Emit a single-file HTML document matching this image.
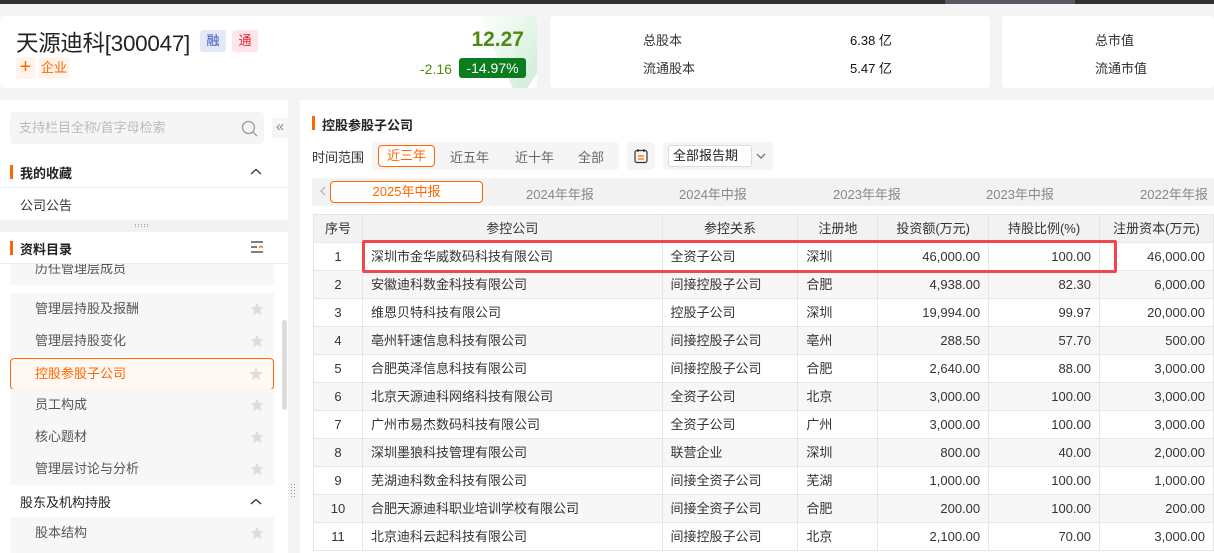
<!DOCTYPE html>
<html><head><meta charset="utf-8"><style>
*{box-sizing:border-box;margin:0;padding:0}
html,body{width:1214px;height:553px;overflow:hidden}
body{background:#f4f4f4;font-family:"Liberation Sans","Noto Sans CJK SC",sans-serif;color:#333;position:relative;font-size:13px}
.abs{position:absolute}
.card{position:absolute;background:#fff;border-radius:4px;top:16px;height:72px;overflow:hidden}
.tag{position:absolute;height:22px;border-radius:3px;font-size:13px;text-align:center;line-height:22px}
.side{position:absolute;left:0;top:100px;width:288px;height:453px;background:#fff;overflow:hidden}
.item{position:absolute;left:10px;width:264px;height:32px;background:#f7f7f7;color:#555;line-height:32px;padding-left:25px;font-size:13px}
.star{position:absolute;right:10px;top:9px;width:14px;height:14px}
.main{position:absolute;left:300px;top:100px;width:914px;height:453px;background:#fff}
.tw{position:absolute;left:313px;top:214px;width:901px;height:339px;overflow:hidden}
table{border-collapse:collapse;font-size:13px;table-layout:fixed}
td,th{height:28px;line-height:26px;border:1px solid #e6e6e6;padding:0 8px;white-space:nowrap;overflow:hidden;box-sizing:border-box}
tr{height:28px}
th{background:#f2f2f2;font-weight:normal;color:#333;text-align:center}
tr:nth-child(odd) td{background:#f7f7f7}
td.c{text-align:center}td.r{text-align:right}
</style></head><body>
<svg width="0" height="0" style="position:absolute"><defs><path id="st" d="M7 0.5 L8.9 5 L13.6 5.3 L10 8.4 L11.1 13.2 L7 10.6 L2.9 13.2 L4 8.4 L0.4 5.3 L5.1 5 Z" fill="#ddd"/></defs></svg>
<div class="abs" style="left:0;top:0;width:1214px;height:4px;background:#2f3033"></div>
<div class="abs" style="left:945px;top:0;width:130px;height:4px;background:#555a60"></div>
<div class="card" style="left:0;width:537px">
 <svg class="abs" style="left:477px;top:0" width="60" height="84"><defs><linearGradient id="g" x1="0" y1="0" x2="1" y2="1"><stop offset="0" stop-color="#fff"/><stop offset="1" stop-color="#c9ecd2"/></linearGradient></defs><path d="M0 0 L60 0 L60 57 L42 84 Z" fill="url(#g)"/></svg>
 <div class="abs" style="left:16px;top:10px;font-size:22.5px;color:#222;letter-spacing:-0.3px;white-space:nowrap">天源迪科[300047]</div>
 <div class="tag" style="left:200px;top:14px;width:26px;background:#e3e8f7;color:#3355bb">融</div>
 <div class="tag" style="left:232px;top:14px;width:26px;background:#fde5e8;color:#e23">通</div>
 <div class="tag" style="left:16px;top:41px;width:19px;background:#fff3ea;color:#f60;font-size:20px;line-height:20px">+</div>
 <div class="tag" style="left:39px;top:41px;width:30px;background:#fff3ea;color:#f60">企业</div>
 <div class="abs" style="right:13px;top:12px;font-size:21px;color:#4f8a10;font-weight:bold">12.27</div>
 <div class="abs" style="left:420px;top:45px;font-size:14px;color:#4f8a10">-2.16</div>
 <div class="abs" style="left:459px;top:42px;width:67px;height:20px;background:#0a7d1e;color:#fff;border-radius:3px;text-align:center;font-size:14px;line-height:20px">-14.97%</div>
</div>
<div class="card" style="left:550px;width:440px;font-size:13px">
 <div class="abs" style="left:93px;top:14px">总股本</div><div class="abs" style="left:300px;top:14px;color:#111">6.38 亿</div>
 <div class="abs" style="left:93px;top:42px">流通股本</div><div class="abs" style="left:300px;top:42px;color:#111">5.47 亿</div>
</div>
<div class="card" style="left:1002px;width:212px">
 <div class="abs" style="left:93px;top:14px">总市值</div>
 <div class="abs" style="left:93px;top:42px">流通市值</div>
</div>

<div class="side">
 <div class="abs" style="left:10px;top:12px;width:254px;height:32px;background:#f5f5f5;border-radius:4px;color:#bbb;line-height:32px;padding-left:9px">支持栏目全称/首字母检索</div>
 <svg class="abs" style="left:241px;top:20px" width="17" height="17"><circle cx="7.5" cy="7.5" r="6" fill="none" stroke="#999" stroke-width="1.3"/><path d="M12 12 L16 16" stroke="#999" stroke-width="1.3"/></svg>
 <div class="abs" style="left:272px;top:18px;width:16px;height:20px;background:#f5f5f5;color:#888;font-size:15px;line-height:18px;text-align:center">«</div>
 <div class="abs" style="left:10px;top:65px;width:3px;height:14px;background:#f60"></div>
 <div class="abs" style="left:20px;top:63px;font-weight:bold;color:#222">我的收藏</div>
 <svg class="abs" style="left:250px;top:68px" width="12" height="8"><path d="M1 6 L6 1.5 L11 6" fill="none" stroke="#333" stroke-width="1.3"/></svg>
 <div class="abs" style="left:0;top:87px;width:288px;height:1px;background:#eee"></div>
 <div class="abs" style="left:20px;top:95px">公司公告</div>
 <div class="abs" style="left:0;top:120px;width:288px;height:12px;background:#f2f2f2"></div>
 <svg class="abs" style="left:135px;top:124px" width="16" height="4"><g fill="#999"><rect x="0" y="0" width="1" height="1"/><rect x="3" y="0" width="1" height="1"/><rect x="6" y="0" width="1" height="1"/><rect x="9" y="0" width="1" height="1"/><rect x="12" y="0" width="1" height="1"/><rect x="0" y="2" width="1" height="1"/><rect x="3" y="2" width="1" height="1"/><rect x="6" y="2" width="1" height="1"/><rect x="9" y="2" width="1" height="1"/><rect x="12" y="2" width="1" height="1"/></g></svg>
 <div class="abs" style="left:10px;top:141px;width:3px;height:14px;background:#f60"></div>
 <div class="abs" style="left:20px;top:139px;font-weight:bold;color:#222">资料目录</div>
 <svg class="abs" style="left:251px;top:141px" width="14" height="12"><path d="M0 1H12M0 6H6M0 11H12" stroke="#333" stroke-width="1.3"/><path d="M8 7 L10 5 L12 7" stroke="#f60" fill="none" stroke-width="1.2"/></svg>
 <div class="abs" style="left:0;top:163px;width:288px;height:1px;background:#eee"></div>
 <div class="item" style="top:164px;height:21px;line-height:10px;overflow:hidden">历任管理层成员</div>
 <div class="item" style="top:193px">管理层持股及报酬<svg class="star"><use href="#st"/></svg></div>
 <div class="item" style="top:225px">管理层持股变化<svg class="star"><use href="#st"/></svg></div>
 <div class="item" style="top:258px;background:#fff8f3;border:1px solid #f60;border-radius:4px;color:#f60;padding-left:24px;line-height:30px">控股参股子公司<svg class="star" style="top:8px"><use href="#st"/></svg></div>
 <div class="item" style="top:289px">员工构成<svg class="star"><use href="#st"/></svg></div>
 <div class="item" style="top:321px">核心题材<svg class="star"><use href="#st"/></svg></div>
 <div class="item" style="top:353px">管理层讨论与分析<svg class="star"><use href="#st"/></svg></div>
 <div class="abs" style="left:20px;top:392px;color:#222">股东及机构持股</div>
 <svg class="abs" style="left:250px;top:398px" width="12" height="8"><path d="M1 6 L6 1.5 L11 6" fill="none" stroke="#333" stroke-width="1.3"/></svg>
 <div class="item" style="top:417px">股本结构<svg class="star"><use href="#st"/></svg></div>
 <div class="item" style="top:449px;height:4px"></div>
 <div class="abs" style="left:282px;top:220px;width:5px;height:90px;background:#ddd;border-radius:3px"></div>
</div>
<svg class="abs" style="left:291px;top:484px" width="5" height="14"><g fill="#999"><rect x="0" y="0" width="1" height="1"/><rect x="3" y="0" width="1" height="1"/><rect x="0" y="3" width="1" height="1"/><rect x="3" y="3" width="1" height="1"/><rect x="0" y="6" width="1" height="1"/><rect x="3" y="6" width="1" height="1"/><rect x="0" y="9" width="1" height="1"/><rect x="3" y="9" width="1" height="1"/><rect x="0" y="12" width="1" height="1"/><rect x="3" y="12" width="1" height="1"/></g></svg>

<div class="main">
 <div class="abs" style="left:12px;top:16px;width:3px;height:14px;background:#f60"></div>
 <div class="abs" style="left:22px;top:15px;font-weight:bold;color:#222">控股参股子公司</div>
 <div class="abs" style="left:12px;top:47px">时间范围</div>
 <div class="abs" style="left:72px;top:42px;width:247px;height:28px;background:#f5f5f5;border-radius:4px"></div>
 <div class="abs" style="left:78px;top:45px;width:57px;height:22px;border:1px solid #f60;border-radius:4px;background:#fff;color:#f60;text-align:center;line-height:20px">近三年</div>
 <div class="abs" style="left:150px;top:47px;color:#666">近五年</div>
 <div class="abs" style="left:215px;top:47px;color:#666">近十年</div>
 <div class="abs" style="left:278px;top:47px;color:#666">全部</div>
 <div class="abs" style="left:327px;top:42px;width:28px;height:28px;background:#f5f5f5;border-radius:4px"></div>
 <svg class="abs" style="left:334px;top:48px" width="14" height="16"><rect x="1" y="2.5" width="12" height="12" rx="2" fill="none" stroke="#333" stroke-width="1.2"/><path d="M4 8H10M4 11H10" stroke="#f60" stroke-width="1.2"/><path d="M4 1V4M10 1V4" stroke="#333" stroke-width="1.2"/></svg>
 <div class="abs" style="left:363px;top:42px;width:110px;height:28px;background:#f5f5f5;border-radius:4px"></div>
 <div class="abs" style="left:368px;top:45px;width:84px;height:22px;border:1px solid #ddd;border-radius:3px;background:#fff;line-height:20px;padding-left:4px;color:#222">全部报告期</div>
 <svg class="abs" style="left:456px;top:53px" width="10" height="6"><path d="M1 1 L5 5 L9 1" fill="none" stroke="#666" stroke-width="1.2"/></svg>
 <div class="abs" style="left:12px;top:78px;width:902px;height:28px;background:#f2f2f2"></div>
 <svg class="abs" style="left:20px;top:86px" width="6" height="10"><path d="M5 1 L1 5 L5 9" fill="none" stroke="#aaa" stroke-width="1.1"/></svg>
 <div class="abs" style="left:30px;top:81px;width:153px;height:22px;border:1px solid #f60;border-radius:4px;background:#fff;color:#f60;text-align:center;line-height:20px">2025年中报</div>
 <div class="abs" style="left:226px;top:84px;color:#888">2024年年报</div>
 <div class="abs" style="left:379px;top:84px;color:#888">2024年中报</div>
 <div class="abs" style="left:533px;top:84px;color:#888">2023年年报</div>
 <div class="abs" style="left:686px;top:84px;color:#888">2023年中报</div>
 <div class="abs" style="left:840px;top:84px;color:#888;white-space:nowrap">2022年年报</div>
</div>

<div class="tw">
<table>
<colgroup><col style="width:49px"><col style="width:300px"><col style="width:136px"><col style="width:80px"><col style="width:111px"><col style="width:111px"><col style="width:114px"></colgroup>
<tr><th>序号</th><th>参控公司</th><th>参控关系</th><th>注册地</th><th>投资额(万元)</th><th>持股比例(%)</th><th>注册资本(万元)</th></tr>
<tr><td class="c">1</td><td>深圳市金华威数码科技有限公司</td><td>全资子公司</td><td>深圳</td><td class="r">46,000.00</td><td class="r">100.00</td><td class="r">46,000.00</td></tr>
<tr><td class="c">2</td><td>安徽迪科数金科技有限公司</td><td>间接控股子公司</td><td>合肥</td><td class="r">4,938.00</td><td class="r">82.30</td><td class="r">6,000.00</td></tr>
<tr><td class="c">3</td><td>维恩贝特科技有限公司</td><td>控股子公司</td><td>深圳</td><td class="r">19,994.00</td><td class="r">99.97</td><td class="r">20,000.00</td></tr>
<tr><td class="c">4</td><td>亳州轩速信息科技有限公司</td><td>间接控股子公司</td><td>亳州</td><td class="r">288.50</td><td class="r">57.70</td><td class="r">500.00</td></tr>
<tr><td class="c">5</td><td>合肥英泽信息科技有限公司</td><td>间接控股子公司</td><td>合肥</td><td class="r">2,640.00</td><td class="r">88.00</td><td class="r">3,000.00</td></tr>
<tr><td class="c">6</td><td>北京天源迪科网络科技有限公司</td><td>全资子公司</td><td>北京</td><td class="r">3,000.00</td><td class="r">100.00</td><td class="r">3,000.00</td></tr>
<tr><td class="c">7</td><td>广州市易杰数码科技有限公司</td><td>全资子公司</td><td>广州</td><td class="r">3,000.00</td><td class="r">100.00</td><td class="r">3,000.00</td></tr>
<tr><td class="c">8</td><td>深圳墨狼科技管理有限公司</td><td>联营企业</td><td>深圳</td><td class="r">800.00</td><td class="r">40.00</td><td class="r">2,000.00</td></tr>
<tr><td class="c">9</td><td>芜湖迪科数金科技有限公司</td><td>间接全资子公司</td><td>芜湖</td><td class="r">1,000.00</td><td class="r">100.00</td><td class="r">1,000.00</td></tr>
<tr><td class="c">10</td><td>合肥天源迪科职业培训学校有限公司</td><td>间接全资子公司</td><td>合肥</td><td class="r">200.00</td><td class="r">100.00</td><td class="r">200.00</td></tr>
<tr><td class="c">11</td><td>北京迪科云起科技有限公司</td><td>间接控股子公司</td><td>北京</td><td class="r">2,100.00</td><td class="r">70.00</td><td class="r">3,000.00</td></tr>
</table>
</div>
<div class="abs" style="left:362px;top:240px;width:755px;height:33px;border:3px solid #f0474f;border-radius:2px"></div>
</body></html>
